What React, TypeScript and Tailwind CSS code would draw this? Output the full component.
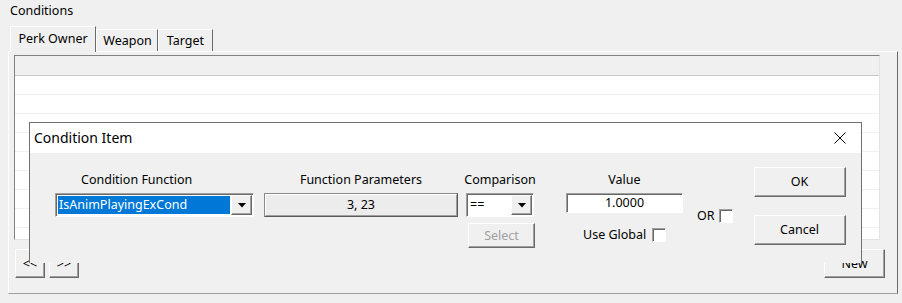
import React from 'react'

const raised =
  'border border-t-white border-l-white border-r-[#696969] border-b-[#696969] shadow-[inset_-1px_-1px_0_#a0a0a0] bg-[#f0f0f0]'
const sunken =
  'border border-t-[#a0a0a0] border-l-[#a0a0a0] border-r-white border-b-white shadow-[inset_1px_1px_0_#696969] bg-white'

function Arrow() {
  return (
    <svg width="8" height="5" viewBox="0 0 8 5">
      <path d="M0 0 H8 L4 4.5 Z" fill="#000" />
    </svg>
  )
}

function DropButton() {
  return (
    <div className={`flex h-full w-[21px] items-center justify-center ${raised}`}>
      <Arrow />
    </div>
  )
}

function Check() {
  return <div className={`h-[14px] w-[14px] shrink-0 ${sunken}`} />
}

export default function App() {
  return (
    <div className="relative h-[303px] w-[902px] overflow-hidden bg-[#f0f0f0] font-['Noto_Sans',sans-serif] text-[12.5px] leading-[16px] text-black">
      <div className="h-[26px] pl-[10px] pt-[3px]">Conditions</div>

      {/* tabs */}
      <div className="flex h-[25px] items-end pl-[10px]">
        <div className="relative z-10 -mb-px flex h-[26px] w-[86px] items-center justify-center border-l border-t border-r border-l-white border-t-white border-r-[#696969] bg-[#f0f0f0] pb-[2px]">
          Perk Owner
        </div>
        <div className="flex h-[22px] w-[62px] items-center justify-center border-l border-t border-r border-l-white border-t-white border-r-[#696969] pl-[1px]">
          Weapon
        </div>
        <div className="flex h-[22px] w-[55px] items-center justify-center border-l border-t border-r border-l-white border-t-white border-r-[#696969]">
          Target
        </div>
      </div>

      {/* tab page */}
      <div className="ml-[8px] h-[243px] w-[890px] border border-t-white border-l-white border-r-[#696969] border-b-[#a0a0a0] pl-[5px] pt-[3px]">
        <div className="h-[185px] w-[866px] border border-t-[#828282] border-l-[#828282] border-r-[#e3e3e3] border-b-[#e3e3e3] bg-white">
          <div className="h-[20px] border-b border-[#c8c8c8] bg-[#f0f0f0]" />
          {Array.from({ length: 9 }).map((_, i) => (
            <div key={i} className="h-[19px] border-b border-[#f0f0f0]" />
          ))}
        </div>
        <div className="mt-[9px] flex items-start pr-[12px]">
          <button className={`ml-[1px] h-[29px] w-[30px] ${raised}`}>&lt;&lt;</button>
          <button className={`ml-[4px] h-[29px] w-[30px] ${raised}`}>&gt;&gt;</button>
          <button className={`ml-auto h-[29px] w-[61px] ${raised}`}>New</button>
        </div>
      </div>

      {/* Condition Item window */}
      <div className="absolute left-[29px] top-[122px] z-20 h-[141px] w-[833px] border-l border-r border-t border-[#707070] bg-[#f0f0f0]">
        <div className="flex h-[30px] items-center justify-between bg-white pl-[4px] pr-[15px] text-[14px]">
          <span className="pb-[1px]">Condition Item</span>
          <svg width="12" height="12" viewBox="0 0 12 12">
            <path d="M0.5 0.5 L11.5 11.5 M11.5 0.5 L0.5 11.5" stroke="#000" strokeWidth="1" />
          </svg>
        </div>

        <div className="flex items-start pl-[25px]">
          {/* Condition Function */}
          <div className="flex w-[199px] flex-col pt-[18px]">
            <div className="h-[18px] pl-[26px] leading-[18px]">Condition Function</div>
            <div className={`mt-[4px] flex h-[24px] w-full items-stretch p-[1px] ${sunken}`}>
              <div className="mx-px my-px flex flex-1 items-center bg-[#0078d7] pl-[1px] text-white">IsAnimPlayingExCond</div>
              <DropButton />
            </div>
          </div>

          {/* Function Parameters */}
          <div className="ml-[10px] flex w-[194px] flex-col items-center pt-[18px]">
            <div className="h-[18px] leading-[18px]">Function Parameters</div>
            <div className="mt-[4px] h-[24px] w-full border border-[#8a8a8a] border-b-[#5a5a5a] border-r-[#5a5a5a]">
              <button className="h-full w-full border border-t-white border-l-white border-r-[#a0a0a0] border-b-[#a0a0a0] bg-[#ececec]">
                3, 23
              </button>
            </div>
          </div>

          {/* Comparison */}
          <div className="ml-[8px] flex w-[68px] flex-col items-center pt-[18px]">
            <div className="h-[18px] whitespace-nowrap leading-[18px]">Comparison</div>
            <div className={`mt-[4px] flex h-[24px] w-full items-stretch p-[1px] ${sunken}`}>
              <div className="flex flex-1 items-center pl-[2px]">==</div>
              <DropButton />
            </div>
            <button className={`ml-[3px] mt-[6px] h-[25px] w-[67px] ${raised} text-[#a0a0a0]`}>Select</button>
          </div>

          {/* Value */}
          <div className="ml-[32px] flex w-[117px] flex-col items-center pt-[18px]">
            <div className="h-[18px] leading-[18px]">Value</div>
            <div className={`mt-[4px] flex h-[20px] w-full items-center justify-center ${sunken}`}>1.0000</div>
            <div className="mt-[15px] flex w-full items-end gap-[6px] pl-[17px]">
              <span className="leading-[14px]">Use Global</span>
              <Check />
            </div>
          </div>

          {/* OR */}
          <div className="ml-[14px] flex items-end gap-[4px] pt-[55px]">
            <span className="leading-[15px]">OR</span>
            <Check />
          </div>

          {/* OK / Cancel */}
          <div className="ml-[21px] flex flex-col gap-[18px] pt-[14px]">
            <button className={`h-[30px] w-[92px] ${raised}`}>OK</button>
            <button className={`h-[30px] w-[92px] ${raised}`}>Cancel</button>
          </div>
        </div>
      </div>
    </div>
  )
}
